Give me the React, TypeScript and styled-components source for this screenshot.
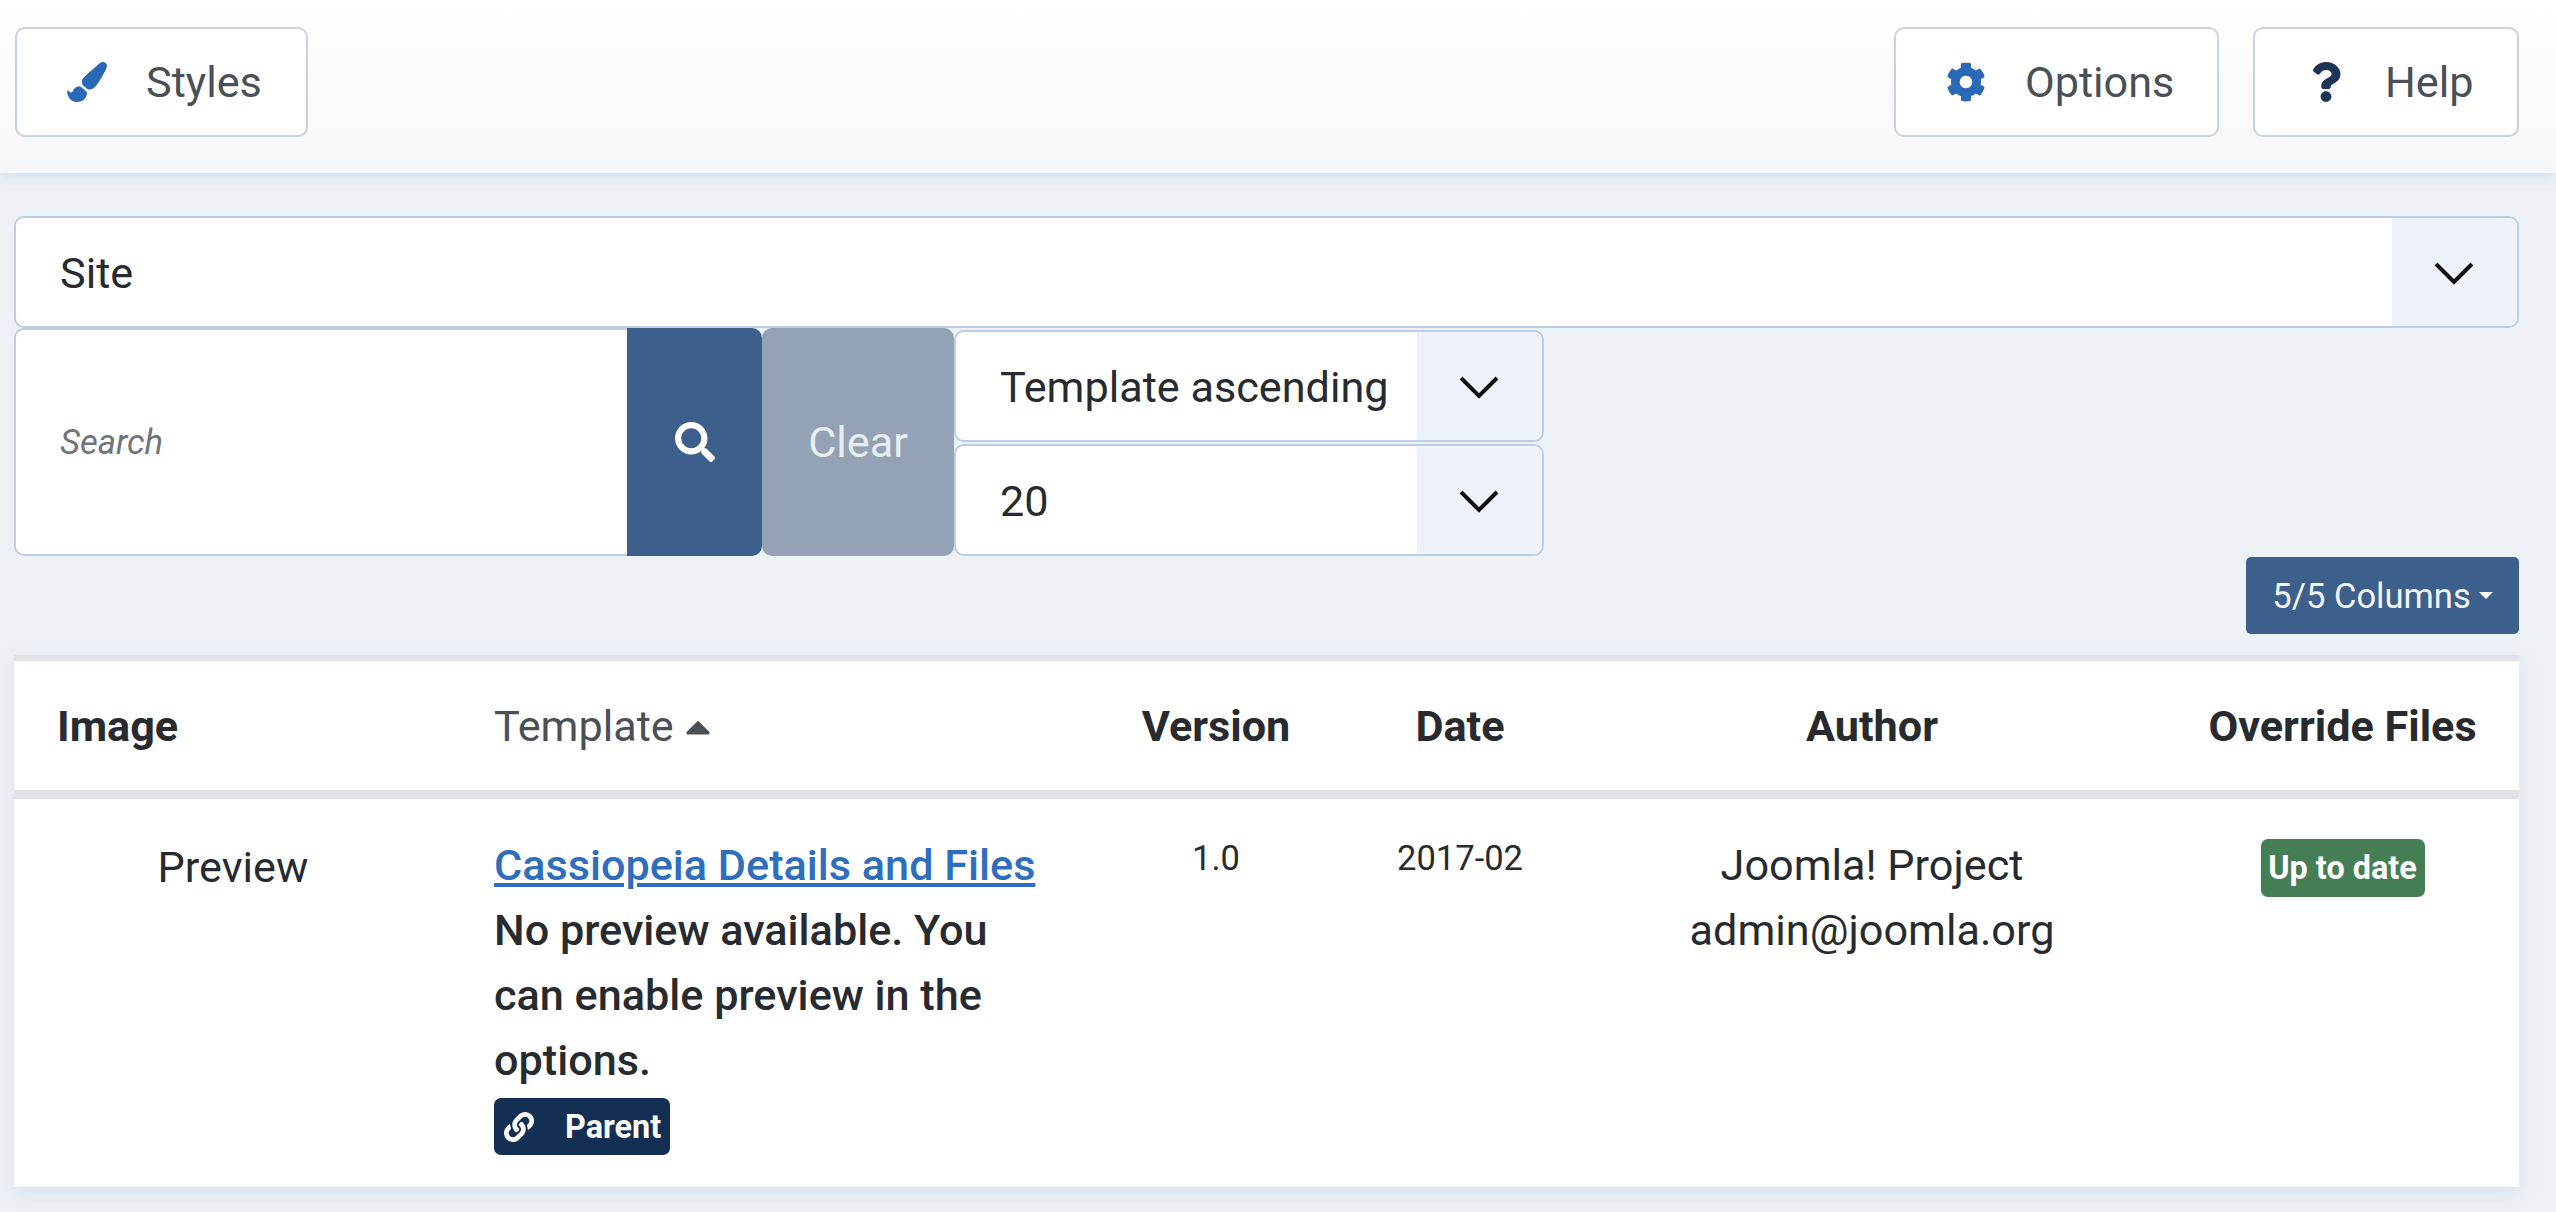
import React from "react";
import styled, { createGlobalStyle } from "styled-components";
import { FaPaintBrush, FaCog, FaQuestion, FaSearch, FaLink, FaCaretUp } from "react-icons/fa";

const Global = createGlobalStyle`
  html, body { margin: 0; padding: 0; background: #edf1f5; }
  body { font-family: Roboto, "Liberation Sans", sans-serif; color: #272b30; overflow: hidden; }
  * { box-sizing: border-box; }
`;

const Page = styled.div`
  width: 2556px;
  height: 1212px;
`;

const Toolbar = styled.header`
  height: 173px;
  padding: 27px 37px 36px 15px;
  display: flex;
  justify-content: space-between;
  background: linear-gradient(180deg, #ffffff 0%, #f5f7fa 100%);
  box-shadow: 0 3px 10px rgba(190, 205, 225, 0.55);
`;

const ToolGroup = styled.div`
  display: flex;
  gap: 34px;
`;

const ToolButton = styled.button<{ $width: number; $pad: number }>`
  width: ${(p) => p.$width}px;
  height: 110px;
  display: flex;
  align-items: center;
  gap: 39px;
  background: #fff;
  border: 2px solid #c9d3df;
  border-radius: 10px;
  font: 400 43.2px Roboto, sans-serif;
  color: #495057;
  padding: 0 0 0 ${(p) => p.$pad}px;
`;

const ToolIcon = styled.span<{ $color: string }>`
  display: flex;
  color: ${(p) => p.$color};
  font-size: 40px;
`;

const Main = styled.main`
  padding: 43px 37px 0 14px;
`;

const SelectBox = styled.div`
  height: 112px;
  display: flex;
  background: #fff;
  border: 2px solid #bccde4;
  border-radius: 10px;
  overflow: hidden;
  font-size: 43.2px;
  color: #272b30;
`;

const SelectText = styled.div`
  flex: 1;
  display: flex;
  align-items: center;
  padding: 2px 0 0 44px;
`;

const SelectArrow = styled.div<{ $width: number }>`
  width: ${(p) => p.$width}px;
  display: flex;
  align-items: center;
  justify-content: center;
  padding: 2px 2px 0 0;
  background: #eef3fb;
  color: #111;
`;

const FilterRow = styled.div`
  display: flex;
  height: 228px;
`;

const SearchInput = styled.input`
  width: 613px;
  height: 100%;
  border: 2px solid #bccde4;
  border-right: 0;
  border-radius: 10px 0 0 10px;
  background: #fff;
  padding: 0 0 0 44px;
  font: italic 400 34.56px Roboto, sans-serif;
  outline: none;
  &::placeholder { color: #6d757e; opacity: 1; }
`;

const SearchButton = styled.button`
  width: 135px;
  height: 100%;
  border: 0;
  border-radius: 0 10px 10px 0;
  background: #3d5f8c;
  color: #fff;
  display: flex;
  align-items: center;
  justify-content: center;
  font-size: 40px;
  padding: 0;
`;

const ClearButton = styled.button`
  width: 192px;
  height: 100%;
  border: 0;
  border-radius: 10px;
  background: #93a3b5;
  color: #e9edf1;
  font: 400 43.2px Roboto, sans-serif;
  padding: 0;
`;

const SelectStack = styled.div`
  width: 590px;
  display: flex;
  flex-direction: column;
  justify-content: space-between;
  padding-top: 2px;
`;

const ColumnsRow = styled.div`
  display: flex;
  justify-content: flex-end;
  margin-top: 1px;
  margin-bottom: 21px;
`;

const ColumnsButton = styled.button`
  width: 273px;
  height: 77px;
  border: 0;
  border-radius: 5px;
  background: #3d5f8c;
  color: #f2f5f9;
  font: 400 34.56px Roboto, sans-serif;
  display: flex;
  align-items: center;
  justify-content: center;
  gap: 8px;
  padding: 0;
`;

const Caret = styled.span`
  width: 0;
  height: 0;
  border-left: 7px solid transparent;
  border-right: 7px solid transparent;
  border-top: 7px solid #fff;
`;

const Table = styled.table`
  width: 2505px;
  table-layout: fixed;
  border-collapse: separate;
  border-spacing: 0;
  background: #fff;
  box-shadow: 0 6px 14px rgba(205, 216, 232, 0.5);
`;

const HeadRow = styled.tr`
  height: 144px;
`;

const Th = styled.th<{ $width: number; $align?: string; $plain?: boolean; $left?: number }>`
  width: ${(p) => p.$width}px;
  height: 144px;
  padding: 2px 42px 0 ${(p) => p.$left ?? 42}px;
  border-top: 6px solid #dfe3e7;
  border-bottom: 9px solid #dfe3e7;
  font-size: 43.2px;
  font-weight: ${(p) => (p.$plain ? 400 : 700)};
  color: ${(p) => (p.$plain ? "#495057" : "#272b30")};
  text-align: ${(p) => p.$align ?? "center"};
`;

const SortWrap = styled.span`
  display: inline-flex;
  align-items: center;
  gap: 4px;
`;

const Td = styled.td<{ $align?: string; $small?: boolean; $top?: number }>`
  vertical-align: top;
  padding: ${(p) => p.$top ?? 34}px 42px 32px;
  font-size: ${(p) => (p.$small ? 34.56 : 43.2)}px;
  line-height: ${(p) => (p.$small ? "52px" : "65px")};
  text-align: ${(p) => p.$align ?? "center"};
  color: #272b30;
`;

const TitleLink = styled.a`
  display: block;
  color: #2f6ebf;
  text-decoration: underline;
  font-weight: 500;
`;

const Note = styled.div`
  font-weight: 500;
`;

const ParentBadge = styled.span`
  display: flex;
  align-items: center;
  width: 176px;
  height: 57px;
  margin-top: 5px;
  padding: 1px 0 0 10px;
  gap: 31px;
  background: #132f53;
  border-radius: 7px;
  color: #fff;
  font-size: 32.4px;
  font-weight: 700;
  line-height: 1;
`;

const StatusBadge = styled.span`
  display: flex;
  align-items: center;
  justify-content: center;
  width: 164px;
  height: 58px;
  margin: 6px auto 0;
  background: #457d54;
  border-radius: 7px;
  color: #fff;
  font-size: 32.4px;
  font-weight: 700;
  line-height: 1;
`;

const Chevron = () => (
  <svg width="42" height="26" viewBox="0 0 42 26" fill="none" aria-hidden="true">
    <path d="M3 4 L21 22 L39 4" stroke="currentColor" strokeWidth="4" />
  </svg>
);

export default function App() {
  return (
    <Page>
      <Global />
      <Toolbar>
        <ToolButton $width={293} $pad={50}>
          <ToolIcon $color="#2a69b8"><FaPaintBrush /></ToolIcon>
          Styles
        </ToolButton>
        <ToolGroup>
          <ToolButton $width={325} $pad={50}>
            <ToolIcon $color="#2a69b8"><FaCog /></ToolIcon>
            Options
          </ToolButton>
          <ToolButton $width={266} $pad={51}>
            <ToolIcon $color="#1c3557"><FaQuestion /></ToolIcon>
            Help
          </ToolButton>
        </ToolGroup>
      </Toolbar>
      <Main>
        <SelectBox>
          <SelectText>Site</SelectText>
          <SelectArrow $width={125}><Chevron /></SelectArrow>
        </SelectBox>
        <FilterRow>
          <SearchInput placeholder="Search" />
          <SearchButton aria-label="Search"><FaSearch /></SearchButton>
          <ClearButton>Clear</ClearButton>
          <SelectStack>
            <SelectBox>
              <SelectText>Template ascending</SelectText>
              <SelectArrow $width={125}><Chevron /></SelectArrow>
            </SelectBox>
            <SelectBox>
              <SelectText>20</SelectText>
              <SelectArrow $width={125}><Chevron /></SelectArrow>
            </SelectBox>
          </SelectStack>
        </FilterRow>
        <ColumnsRow>
          <ColumnsButton>5/5 Columns <Caret /></ColumnsButton>
        </ColumnsRow>
        <Table>
          <thead>
            <HeadRow>
              <Th $width={438} $align="left" $left={43}>Image</Th>
              <Th $width={638} $align="left" $plain>
                <SortWrap>Template <FaCaretUp size={40} /></SortWrap>
              </Th>
              <Th $width={252}>Version</Th>
              <Th $width={236}>Date</Th>
              <Th $width={588}>Author</Th>
              <Th $width={353}>Override Files</Th>
            </HeadRow>
          </thead>
          <tbody>
            <tr>
              <Td $top={36}>Preview</Td>
              <Td $align="left">
                <TitleLink href="#">Cassiopeia Details and Files</TitleLink>
                <Note>No preview available. You can enable preview in the options.</Note>
                <ParentBadge><FaLink size={30} />Parent</ParentBadge>
              </Td>
              <Td $small $top={33}>1.0</Td>
              <Td $small $top={33}>2017-02</Td>
              <Td>Joomla! Project<br />admin@joomla.org</Td>
              <Td><StatusBadge>Up to date</StatusBadge></Td>
            </tr>
          </tbody>
        </Table>
      </Main>
    </Page>
  );
}
